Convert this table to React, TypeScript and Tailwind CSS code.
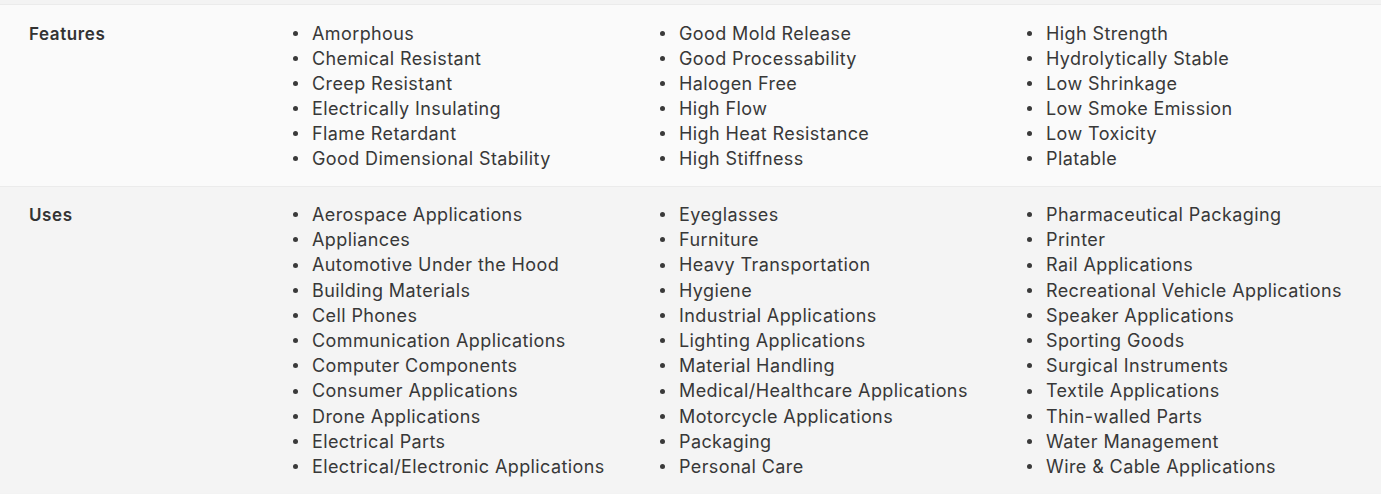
import React from 'react';

const rows: { label: string; cols: string[][] }[] = [
  {
    label: 'Features',
    cols: [
      ['Amorphous', 'Chemical Resistant', 'Creep Resistant', 'Electrically Insulating', 'Flame Retardant', 'Good Dimensional Stability'],
      ['Good Mold Release', 'Good Processability', 'Halogen Free', 'High Flow', 'High Heat Resistance', 'High Stiffness'],
      ['High Strength', 'Hydrolytically Stable', 'Low Shrinkage', 'Low Smoke Emission', 'Low Toxicity', 'Platable'],
    ],
  },
  {
    label: 'Uses',
    cols: [
      [
        'Aerospace Applications', 'Appliances', 'Automotive Under the Hood', 'Building Materials', 'Cell Phones',
        'Communication Applications', 'Computer Components', 'Consumer Applications', 'Drone Applications',
        'Electrical Parts', 'Electrical/Electronic Applications',
      ],
      [
        'Eyeglasses', 'Furniture', 'Heavy Transportation', 'Hygiene', 'Industrial Applications', 'Lighting Applications',
        'Material Handling', 'Medical/Healthcare Applications', 'Motorcycle Applications', 'Packaging', 'Personal Care',
      ],
      [
        'Pharmaceutical Packaging', 'Printer', 'Rail Applications', 'Recreational Vehicle Applications',
        'Speaker Applications', 'Sporting Goods', 'Surgical Instruments', 'Textile Applications', 'Thin-walled Parts',
        'Water Management', 'Wire & Cable Applications',
      ],
    ],
  },
];

export default function App() {
  return (
    <div className="w-[1381px] h-[494px] bg-[#f3f3f3] pt-[4px] text-[#383838]" style={{ fontFamily: 'Inter, "Open Sans", sans-serif' }}>
      <div className="border-t border-[#ebebeb]">
        {rows.map((row, i) => (
          <div
            key={row.label}
            className={i === 0 ? 'flex pt-[16px] pb-[15px] bg-[#fafafa] border-b border-[#ebebeb]' : 'flex pt-[15px] pb-[14px] bg-[#f4f4f4]'}
          >
            <div className="w-[280px] pl-[29px] pt-[1px] text-[17px] leading-[25px] font-semibold tracking-[0.6px] text-[#333]">{row.label}</div>
            <div className="flex">
              {row.cols.map((col, j) => (
                <ul key={j} className="w-[367px]">
                  {col.map(item => (
                    <li
                      key={item}
                      className={`flex items-center text-[18px] tracking-[0.4px] ${i === 0 ? 'leading-[25px]' : 'leading-[25.2px]'}`}
                    >
                      <span className="ml-[13px] mr-[14px] w-[5px] h-[5px] rounded-full bg-[#3a3a3a] shrink-0" />
                      {item}
                    </li>
                  ))}
                </ul>
              ))}
            </div>
          </div>
        ))}
      </div>
    </div>
  );
}
